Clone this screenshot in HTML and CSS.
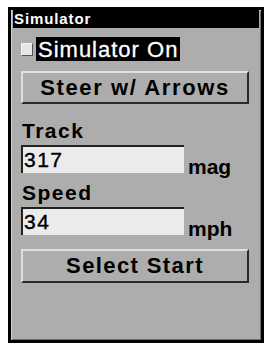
FILE: index.html
```html
<!DOCTYPE html>
<html lang="en">
<head>
	<meta charset="UTF-8">
	<title>Simulator</title>
	<link rel="stylesheet" href="styles.css">
</head>
<body>
	<div class="screen">
		<div class="title">Simulator</div>
		<div class="body">
			<div class="check-row">
				<span class="check"></span>
				<span class="check-label">Simulator On</span>
			</div>
			<div class="btn btn-steer">Steer w/ Arrows</div>
			<div class="label label-track">Track</div>
			<div class="field-row">
				<div class="field">317</div>
				<span class="unit">mag</span>
			</div>
			<div class="label label-speed">Speed</div>
			<div class="field-row">
				<div class="field">34</div>
				<span class="unit">mph</span>
			</div>
			<div class="btn btn-start">Select Start</div>
		</div>
	</div>
</body>
</html>
```

FILE: styles.css
```css
body,div,span{
	margin: 0;
	padding: 0;
}
body{
	background: #fff;
	font-family: "Liberation Sans", Arial, sans-serif;
	color: #000;
}
.screen{
	box-sizing: border-box;
	width: 256px;
	height: 336px;
	margin: 7px 0 0 8px;
	border: 3px solid #000;
	background: #adadad;
	box-shadow: inset 1px 1px 0 #cfcfcf, inset -1px -1px 0 #6e6e6e;
}
.title{
	height: 18px;
	margin: 0 2px;
	padding-left: 1px;
	background: #000;
	color: #fff;
	font-size: 15px;
	font-weight: bold;
	line-height: 18px;
	letter-spacing: 0.9px;
}
.body{
	display: flex;
	flex-direction: column;
	padding: 0 12px 0 10px;
}
.check-row{
	display: flex;
	align-items: center;
	gap: 3px;
	margin-top: 9px;
	height: 24px;
}
.check{
	box-sizing: border-box;
	width: 12px;
	height: 13px;
	margin-top: 1px;
	background: #e6e6e6;
	border: 1px solid #f4f4f4;
	border-right-color: #555;
	border-bottom-color: #555;
}
.check-label{
	height: 24px;
	padding: 0 2px;
	background: #000;
	color: #fff;
	font-size: 22px;
	line-height: 25px;
	letter-spacing: 1px;
	-webkit-text-stroke: 0.3px #fff;
}
.btn{
	box-sizing: border-box;
	width: 228px;
	border-top: 2px solid #dedede;
	border-left: 2px solid #dedede;
	border-right: 2px solid #2a2a2a;
	border-bottom: 2px solid #2a2a2a;
	background: #adadad;
	text-align: center;
	font-weight: bold;
	font-size: 22px;
}
.btn-steer{
	height: 33px;
	margin-top: 10px;
	line-height: 29px;
	letter-spacing: 1.6px;
}
.btn-start{
	height: 34px;
	margin-top: 14px;
	line-height: 30px;
	letter-spacing: 1.4px;
}
.label{
	height: 24px;
	font-size: 21px;
	font-weight: bold;
	line-height: 24px;
	letter-spacing: 1.5px;
	padding-left: 1px;
}
.label-track{
	margin-top: 15px;
}
.label-speed{
	margin-top: 8px;
}
.field-row{
	display: flex;
	align-items: flex-end;
	margin-top: 2px;
}
.field{
	box-sizing: border-box;
	width: 163px;
	height: 28px;
	padding-left: 1px;
	background: #ebebeb;
	border-top: 2px solid #222;
	border-left: 2px solid #222;
	font-size: 21px;
	line-height: 25px;
	letter-spacing: 1.5px;
	-webkit-text-stroke: 0.4px #000;
}
.unit{
	margin-left: 4px;
	margin-bottom: -6px;
	font-size: 21px;
	font-weight: bold;
	line-height: 24px;
}
```
